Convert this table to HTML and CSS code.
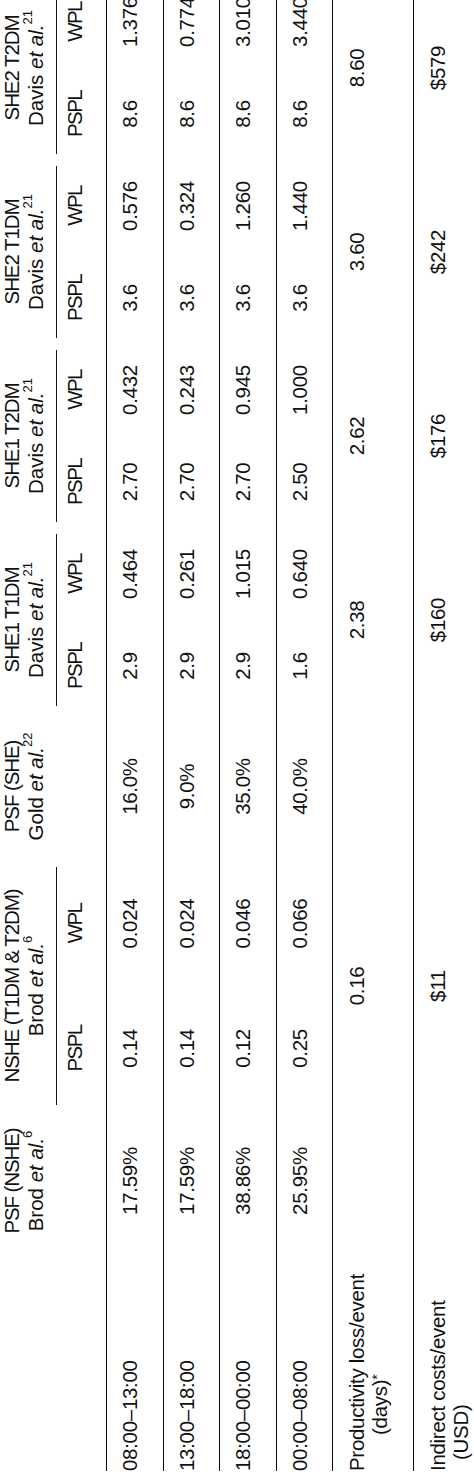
FILE: index.html
```html
<!DOCTYPE html>
<html lang="en">
<head>
<meta charset="utf-8">
<title>Productivity loss and indirect costs</title>
<link rel="stylesheet" href="styles.css">
</head>
<body>
<div class="viewport">
  <div class="rot">
    <div class="tbl">
      <div class="head">
        <div class="hcell c-label"></div>
        <div class="hcell c-psf1">
          <div class="ttl">PSF (NSHE)</div>
          <div>Brod <i>et al.</i><sup>6</sup></div>
        </div>
        <div class="grp g-nshe">
          <div class="grp-title">
            <div class="ttl">NSHE (T1DM &amp; T2DM)</div>
            <div>Brod <i>et al.</i><sup>6</sup></div>
          </div>
          <div class="grp-sub"><div class="sub">PSPL</div><div class="sub">WPL</div></div>
        </div>
        <div class="hcell c-psf2">
          <div class="ttl">PSF (SHE)</div>
          <div>Gold <i>et al.</i><sup>22</sup></div>
        </div>
        <div class="grp g-she">
          <div class="grp-title">
            <div class="ttl">SHE1 T1DM</div>
            <div>Davis <i>et al.</i><sup>21</sup></div>
          </div>
          <div class="grp-sub"><div class="sub">PSPL</div><div class="sub">WPL</div></div>
        </div>
        <div class="grp g-she">
          <div class="grp-title">
            <div class="ttl">SHE1 T2DM</div>
            <div>Davis <i>et al.</i><sup>21</sup></div>
          </div>
          <div class="grp-sub"><div class="sub">PSPL</div><div class="sub">WPL</div></div>
        </div>
        <div class="grp g-she">
          <div class="grp-title">
            <div class="ttl">SHE2 T1DM</div>
            <div>Davis <i>et al.</i><sup>21</sup></div>
          </div>
          <div class="grp-sub"><div class="sub">PSPL</div><div class="sub">WPL</div></div>
        </div>
        <div class="grp g-she">
          <div class="grp-title">
            <div class="ttl">SHE2 T2DM</div>
            <div>Davis <i>et al.</i><sup>21</sup></div>
          </div>
          <div class="grp-sub"><div class="sub">PSPL</div><div class="sub">WPL</div></div>
        </div>
      </div>

      <div class="row r57">
        <div class="cell c-label lab">08:00–13:00</div>
        <div class="cell c-psf1">17.59%</div>
        <div class="cell c-n">0.14</div><div class="cell c-n">0.024</div>
        <div class="cell c-psf2">16.0%</div>
        <div class="cell c-s">2.9</div><div class="cell c-s">0.464</div>
        <div class="cell c-s">2.70</div><div class="cell c-s">0.432</div>
        <div class="cell c-s">3.6</div><div class="cell c-s">0.576</div>
        <div class="cell c-s">8.6</div><div class="cell c-s">1.376</div>
      </div>
      <div class="row r56">
        <div class="cell c-label lab">13:00–18:00</div>
        <div class="cell c-psf1">17.59%</div>
        <div class="cell c-n">0.14</div><div class="cell c-n">0.024</div>
        <div class="cell c-psf2">9.0%</div>
        <div class="cell c-s">2.9</div><div class="cell c-s">0.261</div>
        <div class="cell c-s">2.70</div><div class="cell c-s">0.243</div>
        <div class="cell c-s">3.6</div><div class="cell c-s">0.324</div>
        <div class="cell c-s">8.6</div><div class="cell c-s">0.774</div>
      </div>
      <div class="row r57">
        <div class="cell c-label lab">18:00–00:00</div>
        <div class="cell c-psf1">38.86%</div>
        <div class="cell c-n">0.12</div><div class="cell c-n">0.046</div>
        <div class="cell c-psf2">35.0%</div>
        <div class="cell c-s">2.9</div><div class="cell c-s">1.015</div>
        <div class="cell c-s">2.70</div><div class="cell c-s">0.945</div>
        <div class="cell c-s">3.6</div><div class="cell c-s">1.260</div>
        <div class="cell c-s">8.6</div><div class="cell c-s">3.010</div>
      </div>
      <div class="row r56">
        <div class="cell c-label lab">00:00–08:00</div>
        <div class="cell c-psf1">25.95%</div>
        <div class="cell c-n">0.25</div><div class="cell c-n">0.066</div>
        <div class="cell c-psf2">40.0%</div>
        <div class="cell c-s">1.6</div><div class="cell c-s">0.640</div>
        <div class="cell c-s">2.50</div><div class="cell c-s">1.000</div>
        <div class="cell c-s">3.6</div><div class="cell c-s">1.440</div>
        <div class="cell c-s">8.6</div><div class="cell c-s">3.440</div>
      </div>
      <div class="row r81 tall">
        <div class="cell c-label lab">Productivity loss/event<span class="l2 days">(days)<span class="ast">*</span></span></div>
        <div class="cell c-psf1"></div>
        <div class="cell c-nn">0.16</div>
        <div class="cell c-psf2"></div>
        <div class="cell c-ss">2.38</div>
        <div class="cell c-ss">2.62</div>
        <div class="cell c-ss">3.60</div>
        <div class="cell c-ss">8.60</div>
      </div>
      <div class="row rlast tall">
        <div class="cell c-label lab">Indirect costs/event<span class="l2 usd">(USD)</span></div>
        <div class="cell c-psf1"></div>
        <div class="cell c-nn">$11</div>
        <div class="cell c-psf2"></div>
        <div class="cell c-ss">$160</div>
        <div class="cell c-ss">$176</div>
        <div class="cell c-ss">$242</div>
        <div class="cell c-ss">$579</div>
      </div>
    </div>
  </div>
</div>
</body>
</html>
```
FILE: styles.css
```css
html, body {
  margin: 0;
  padding: 0;
  background: #ffffff;
  overflow: hidden;
}

.viewport {
  width: 474px;
  height: 1472px;
  overflow: hidden;
}

.rot {
  width: 1495px;
  transform-origin: 0 0;
  transform: translate(0, 1472px) rotate(-90deg);
}

.tbl {
  margin-top: -1px;
  font-family: "Liberation Sans", Arial, sans-serif;
  font-size: 20.5px;
  line-height: 24px;
  color: #111111;
}

.tbl sup {
  font-size: 13px;
  line-height: 0;
  vertical-align: 11px;
}

.ast {
  font-size: 14px;
  line-height: 0;
  vertical-align: 5px;
}

.head {
  display: flex;
  height: 106px;
}

.hcell {
  flex: none;
  text-align: center;
}

.ttl {
  letter-spacing: -1.1px;
}

.grp {
  flex: none;
  display: flex;
  flex-direction: column;
}

.g-nshe { width: 250px; }
.g-she { width: 184px; }

.grp-title {
  height: 57px;
  box-sizing: border-box;
  margin: 0 6px;
  border-bottom: 1px solid #111111;
  text-align: center;
}

.grp-sub {
  display: flex;
  padding-top: 6px;
}

.sub {
  flex: 1;
  text-align: center;
  letter-spacing: -1.6px;
}

.row {
  display: flex;
  box-sizing: border-box;
  border-top: 1.5px solid #0d0d0d;
}

.r57 { height: 57px; }
.r56 { height: 56px; }
.r81 { height: 81px; }
.rlast { height: 110px; }

.cell {
  flex: none;
  box-sizing: border-box;
  padding-top: 11px;
  text-align: center;
  letter-spacing: -0.3px;
}

.tall .cell {
  padding-top: 12px;
}

.c-label { width: 220px; }
.c-psf1 { width: 140px; }
.c-n { width: 125px; }
.c-nn { width: 250px; }
.c-psf2 { width: 149px; }
.c-s { width: 92px; }
.c-ss { width: 184px; }

.lab {
  text-align: left;
  line-height: 23px;
  padding-left: 0;
}

.l2 {
  display: block;
}

.days { padding-left: 36px; }
.usd { padding-left: 11px; }
```
